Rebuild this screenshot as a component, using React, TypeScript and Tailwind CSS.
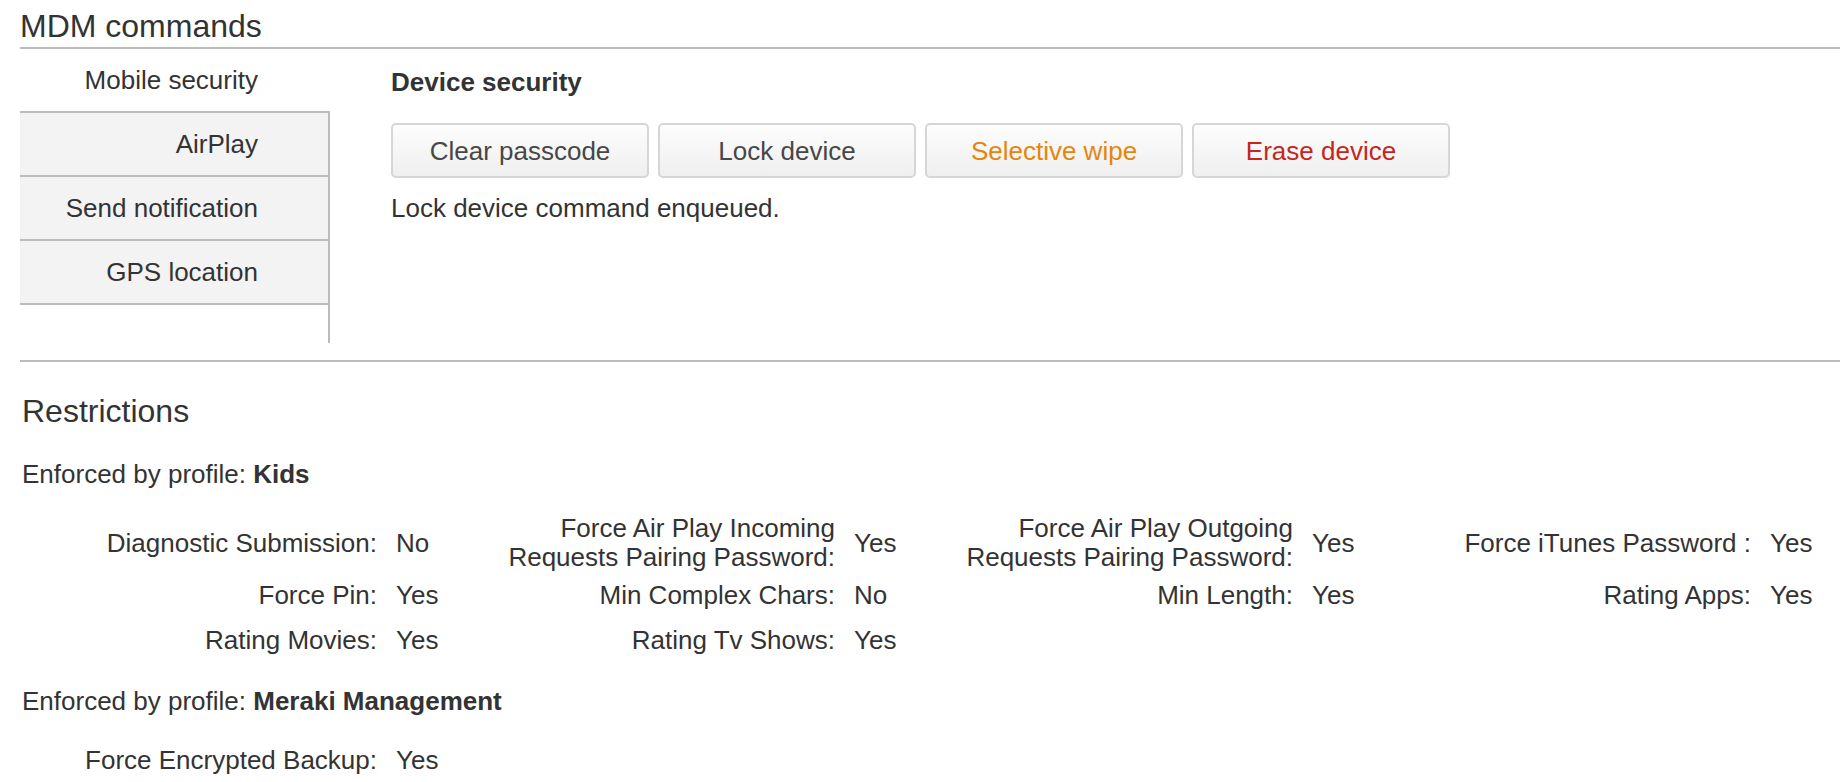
import React from "react";

const tabs = ["AirPlay", "Send notification", "GPS location"];

const restrictionRows: [string, string][][] = [
  [
    ["Diagnostic Submission:", "No"],
    ["Force Air Play Incoming Requests Pairing Password:", "Yes"],
    ["Force Air Play Outgoing Requests Pairing Password:", "Yes"],
    ["Force iTunes Password :", "Yes"],
  ],
  [
    ["Force Pin:", "Yes"],
    ["Min Complex Chars:", "No"],
    ["Min Length:", "Yes"],
    ["Rating Apps:", "Yes"],
  ],
  [
    ["Rating Movies:", "Yes"],
    ["Rating Tv Shows:", "Yes"],
  ],
];

const merakiRows: [string, string][][] = [[["Force Encrypted Backup:", "Yes"]]];

function CommandButton({ label, tone }: { label: string; tone: "default" | "warn" | "danger" }) {
  const color =
    tone === "warn" ? "text-[#e5860b]" : tone === "danger" ? "text-[#c5261c]" : "text-[#474747]";
  return (
    <button
      type="button"
      className={`w-[258px] h-[55px] rounded-[5px] border-2 border-[#d6d6d6] bg-gradient-to-b from-[#fdfdfd] to-[#efefef] text-[26px] leading-[30px] ${color}`}
    >
      {label}
    </button>
  );
}

function RestrictionTable({ rows }: { rows: [string, string][][] }) {
  return (
    <div>
      {rows.map((row, i) => (
        <div
          key={i}
          className="grid grid-cols-[355px_103px_355px_103px_355px_103px_355px_80px] items-center min-h-[45px]"
        >
          {row.map(([label, value]) => (
            <React.Fragment key={label}>
              <div className="py-[1px] text-right leading-[29px]">{label}</div>
              <div className="pl-[19px] leading-[29px]">{value}</div>
            </React.Fragment>
          ))}
        </div>
      ))}
    </div>
  );
}

export default function App() {
  return (
    <div className="min-h-screen bg-white font-['Liberation_Sans',Arial,sans-serif] text-[26px] text-[#333]">
      {/* MDM commands */}
      <div className="pl-[20px]">
        <h1 className="pt-[6px] text-[32px] leading-[41px] border-b-2 border-[#bbb]">MDM commands</h1>
        <div className="flex">
          <div className="w-[310px] shrink-0 flex flex-col">
            <div className="h-[62px] flex items-center justify-end pr-[72px] leading-[30px]">
              Mobile security
            </div>
            <div className="border-r-2 border-[#bbb]">
              {tabs.map((t) => (
                <div
                  key={t}
                  className="h-[64px] border-t-2 border-[#bbb] bg-[#f3f3f3] flex items-center justify-end pr-[70px] leading-[30px]"
                >
                  {t}
                </div>
              ))}
              <div className="h-[40px] border-t-2 border-[#bbb]" />
            </div>
          </div>
          <div className="pl-[61px] pt-[18px]">
            <h2 className="font-bold leading-[30px]">Device security</h2>
            <div className="mt-[26px] flex gap-[9px]">
              <CommandButton label="Clear passcode" tone="default" />
              <CommandButton label="Lock device" tone="default" />
              <CommandButton label="Selective wipe" tone="warn" />
              <CommandButton label="Erase device" tone="danger" />
            </div>
            <p className="mt-[15px] leading-[30px]">Lock device command enqueued.</p>
          </div>
        </div>
        <div className="mt-[17px] border-t-2 border-[#bbb]" />
      </div>

      {/* Restrictions */}
      <div className="pl-[22px]">
        <h2 className="mt-[29px] text-[32px] leading-[40px]">Restrictions</h2>
        <p className="mt-[28px] leading-[30px]">
          Enforced by profile: <span className="font-bold">Kids</span>
        </p>
        <div className="mt-[24px]">
          <RestrictionTable rows={restrictionRows} />
        </div>
        <p className="mt-[23px] leading-[30px]">
          Enforced by profile: <span className="font-bold">Meraki Management</span>
        </p>
        <div className="mt-[22px]">
          <RestrictionTable rows={merakiRows} />
        </div>
      </div>
    </div>
  );
}
